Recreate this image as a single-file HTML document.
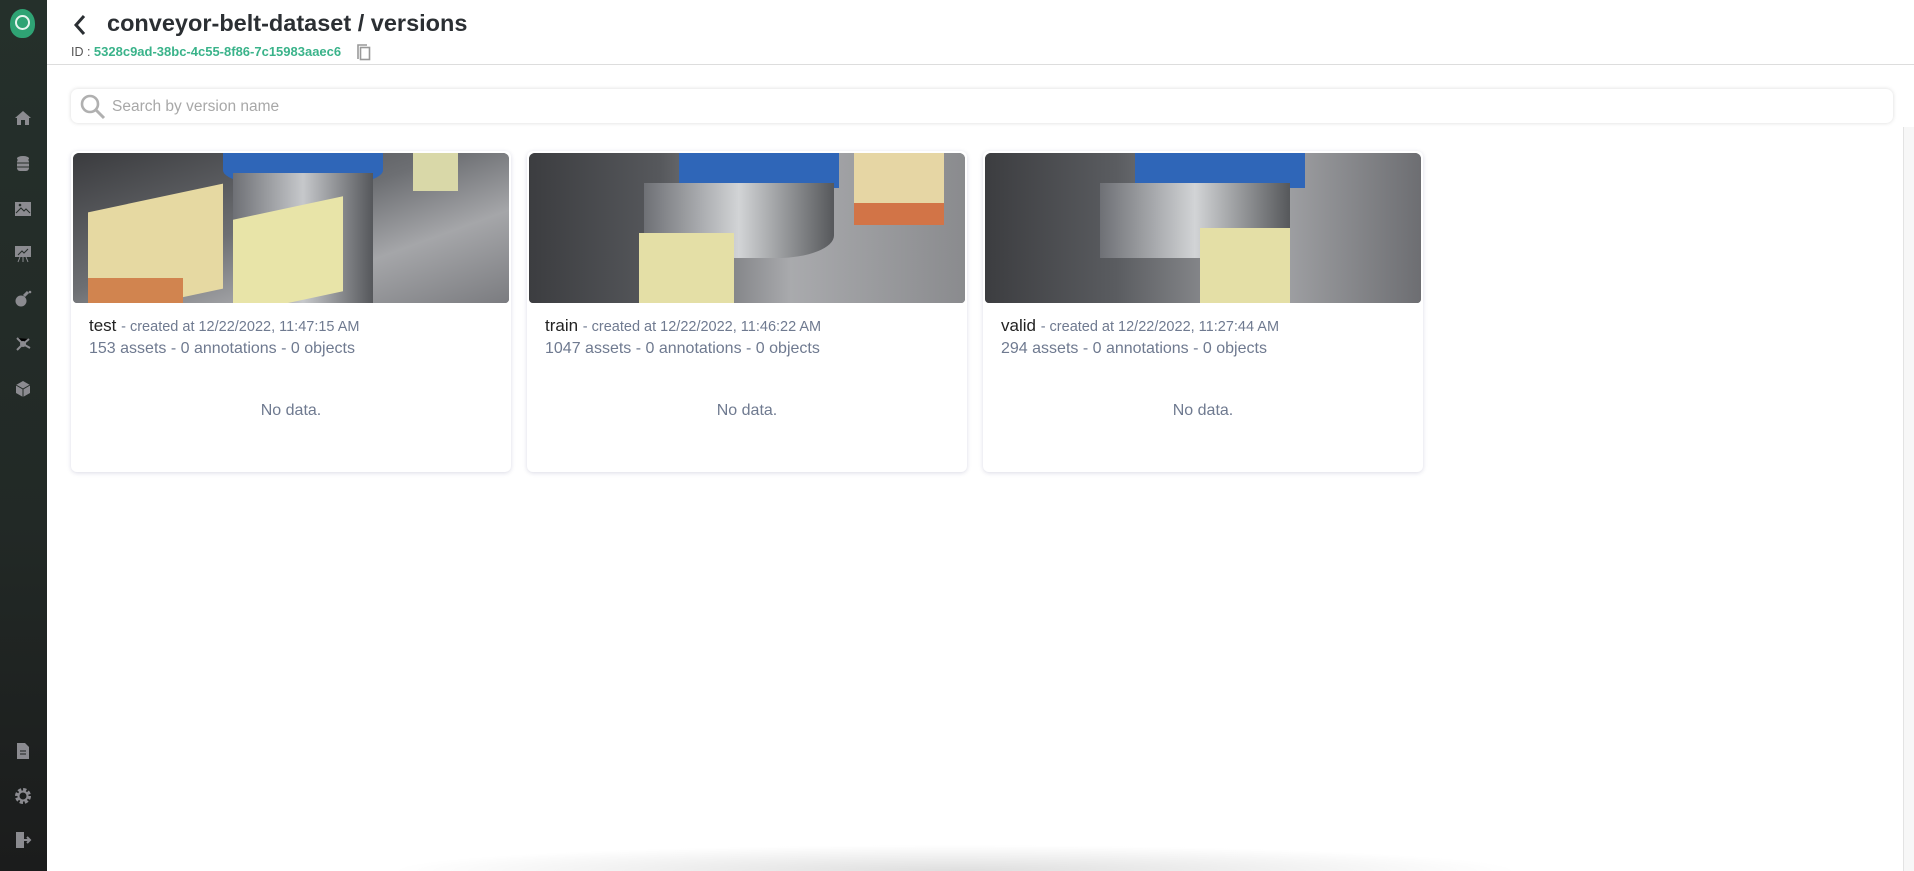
<!DOCTYPE html>
<html style="overflow:hidden;width:1914px;height:871px"><head><meta charset="utf-8"><style>
*{box-sizing:border-box;margin:0;padding:0}
body{width:1914px;height:871px;overflow:hidden;background:#fff;font-family:"Liberation Sans",sans-serif;position:relative}
.sb{position:absolute;left:0;top:0;width:47px;height:871px;background:linear-gradient(#25302b,#222926 60%,#1b1c1c)}
.ic{position:absolute;left:14px;width:18px;height:18px}
.title{position:absolute;left:107px;top:10px;font-size:23.5px;font-weight:bold;color:#2b2f33}
.idl{position:absolute;left:71px;top:44px;font-size:12.5px;color:#555}
.idl b{color:#3ab38a;font-size:13px}
.hdr{position:absolute;left:47px;right:0;top:64px;height:1px;background:#ddd}
.search{position:absolute;left:71px;top:89px;width:1822px;height:34px;border-radius:7px;box-shadow:0 0 4px rgba(0,0,0,.15);background:#fff}
.search span{position:absolute;left:41px;top:9px;font-size:15.5px;color:#a8a8a8}
.card{position:absolute;top:151px;width:440px;height:321px;border-radius:6px;background:#fff;box-shadow:0 1px 4px rgba(90,90,140,.22)}
.img{position:absolute;left:2px;top:2px;width:436px;height:150px;border-radius:6px 6px 4px 4px;overflow:hidden;background:#5c5e62}
.img div{position:absolute}
.nm{position:absolute;left:18px;top:165px;font-size:17px;color:#222}
.nm small{font-size:14.5px;color:#6f7a90}
.st{position:absolute;left:18px;top:189px;font-size:16px;color:#6f7a90}
.nd{position:absolute;left:0;right:0;top:251px;text-align:center;font-size:16px;color:#6f7a90}
</style></head><body>
<div class="sb">
<div style="position:absolute;left:10px;top:9px;width:25px;height:29px;border-radius:50% 50% 45% 45%;background:#2fa374"></div>
<div style="position:absolute;left:15px;top:15px;width:15px;height:15px;border-radius:50%;border:2px solid #e8f5ef"></div>
<svg class="ic" style="top:109px" viewBox="0 0 18 18"><path d="M9 2L1 9h2v7h4v-5h4v5h4V9h2z" fill="#8b8b90"/></svg>
<svg class="ic" style="top:155px" viewBox="0 0 18 18"><ellipse cx="9" cy="3.5" rx="6" ry="2.5" fill="#8b8b90"/><rect x="3" y="4" width="12" height="12" rx="3" fill="#8b8b90"/><path d="M3 8h12M3 12h12" stroke="#242c28"/></svg>
<svg class="ic" style="top:200px" viewBox="0 0 18 18"><rect x="1" y="2" width="16" height="14" fill="#8b8b90"/><path d="M2 13l5-5 3 3 2-2 4 4" stroke="#242c28" fill="none"/><circle cx="6" cy="5" r="1.3" fill="#242c28"/></svg>
<svg class="ic" style="top:245px" viewBox="0 0 18 18"><rect x="1" y="1" width="16" height="11" fill="#8b8b90"/><path d="M4 10l4-4 2 2 4-4" stroke="#242c28" fill="none"/><path d="M6 12l-2 5M12 12l2 5M9 12v5" stroke="#8b8b90"/></svg>
<svg class="ic" style="top:290px" viewBox="0 0 18 18"><circle cx="7" cy="11" r="5.5" fill="#8b8b90"/><path d="M10 6l4-4" stroke="#8b8b90" stroke-width="3"/><circle cx="16" cy="2" r="1.3" fill="#8b8b90"/></svg>
<svg class="ic" style="top:335px" viewBox="0 0 18 18"><path d="M3 3l6 6 6-5M9 9l-6 6M9 9l7 4" stroke="#8b8b90" stroke-width="2"/><circle cx="9" cy="9" r="3" fill="#8b8b90"/></svg>
<svg class="ic" style="top:380px" viewBox="0 0 18 18"><path d="M9 1l7 4v8l-7 4-7-4V5z" fill="#8b8b90"/><path d="M2 5l7 4 7-4M9 9v8" stroke="#242c28" fill="none"/></svg>
<svg class="ic" style="top:742px" viewBox="0 0 18 18"><path d="M3 1h8l4 4v12H3z" fill="#8b8b90"/><path d="M6 9h6M6 12h6" stroke="#1e2120"/></svg>
<svg class="ic" style="top:787px" viewBox="0 0 18 18"><circle cx="9" cy="9" r="6" fill="none" stroke="#8b8b90" stroke-width="4" stroke-dasharray="3 1.7"/><circle cx="9" cy="9" r="4.5" fill="none" stroke="#8b8b90" stroke-width="2"/></svg>
<svg class="ic" style="top:831px" viewBox="0 0 18 18"><path d="M2 1h8v16H2z" fill="#8b8b90"/><path d="M8 9h8M13 6l3 3-3 3" stroke="#8b8b90" stroke-width="2" fill="none"/></svg>
</div>
<svg style="position:absolute;left:72px;top:14px" width="16" height="22" viewBox="0 0 16 22"><path d="M12 2L4 11l8 9" stroke="#2b2f33" stroke-width="3" fill="none"/></svg>
<div class="title">conveyor-belt-dataset / versions</div>
<div class="idl">ID : <b>5328c9ad-38bc-4c55-8f86-7c15983aaec6</b></div>
<svg style="position:absolute;left:356px;top:44px" width="15" height="17" viewBox="0 0 15 17"><path d="M2 3v12" stroke="#999" stroke-width="1.6"/><rect x="4.5" y="3.5" width="9" height="12" fill="none" stroke="#999" stroke-width="1.6"/><path d="M2 3V1h9" stroke="#999" stroke-width="1.6" fill="none"/></svg>
<div class="hdr"></div>
<div class="search"><svg style="position:absolute;left:8px;top:4px" width="28" height="28" viewBox="0 0 28 28"><circle cx="11" cy="11" r="8" fill="none" stroke="#b0b0b0" stroke-width="2.6"/><path d="M17 17l8 8" stroke="#b0b0b0" stroke-width="3"/></svg><span>Search by version name</span></div>
<div style="position:absolute;left:1903px;top:127px;width:11px;height:744px;background:#f7f7f7;border-left:1px solid #e3e3e3"></div>
<div style="position:absolute;left:390px;top:845px;width:1130px;height:26px;background:radial-gradient(ellipse 50% 100% at 50% 100%,rgba(0,0,0,.13),rgba(0,0,0,0))"></div>

<div class="card" style="left:71px"><div class="img">
<div style="left:0;top:0;width:436px;height:150px;background:linear-gradient(160deg,#3a3b3e,#6d6f73 45%,#a5a6a9 70%,#7b7c80)"></div>
<div style="left:150px;top:0;width:160px;height:35px;background:#2f66b8;border-radius:0 0 50% 50%"></div>
<div style="left:160px;top:20px;width:140px;height:130px;background:linear-gradient(90deg,#6e7075,#c6c8cb,#55575b)"></div>
<div style="left:15px;top:45px;width:135px;height:105px;background:#e6d9a2;transform:skewY(-12deg)"></div>
<div style="left:15px;top:125px;width:95px;height:25px;background:#d1844f"></div>
<div style="left:160px;top:55px;width:110px;height:95px;background:#e8e4a8;transform:skewY(-12deg)"></div>
<div style="left:340px;top:0;width:45px;height:38px;background:#d9d8a8"></div>
</div><div class="nm">test <small>- created at 12/22/2022, 11:47:15 AM</small></div><div class="st">153 assets - 0 annotations - 0 objects</div><div class="nd">No data.</div></div>

<div class="card" style="left:527px"><div class="img">
<div style="left:0;top:0;width:436px;height:150px;background:linear-gradient(90deg,#3c3d40,#56585c 30%,#a9aaad 60%,#8a8b8e)"></div>
<div style="left:150px;top:0;width:160px;height:35px;background:#2f66b8"></div>
<div style="left:115px;top:30px;width:190px;height:75px;background:linear-gradient(90deg,#6e7075,#d2d4d6,#56585b);border-radius:0 0 30% 0"></div>
<div style="left:110px;top:80px;width:95px;height:70px;background:#e4dfa6"></div>
<div style="left:325px;top:0;width:90px;height:70px;background:#e6d6a4"></div>
<div style="left:325px;top:50px;width:90px;height:22px;background:#d27447"></div>
</div><div class="nm">train <small>- created at 12/22/2022, 11:46:22 AM</small></div><div class="st">1047 assets - 0 annotations - 0 objects</div><div class="nd">No data.</div></div>

<div class="card" style="left:983px"><div class="img">
<div style="left:0;top:0;width:436px;height:150px;background:linear-gradient(90deg,#3c3d40,#5a5c60 30%,#a5a6a9 65%,#6d6e72)"></div>
<div style="left:150px;top:0;width:170px;height:35px;background:#2f66b8"></div>
<div style="left:115px;top:30px;width:190px;height:75px;background:linear-gradient(90deg,#6e7075,#d2d4d6,#56585b)"></div>
<div style="left:215px;top:75px;width:90px;height:75px;background:#e4dfa6"></div>
</div><div class="nm">valid <small>- created at 12/22/2022, 11:27:44 AM</small></div><div class="st">294 assets - 0 annotations - 0 objects</div><div class="nd">No data.</div></div>
</body></html>
